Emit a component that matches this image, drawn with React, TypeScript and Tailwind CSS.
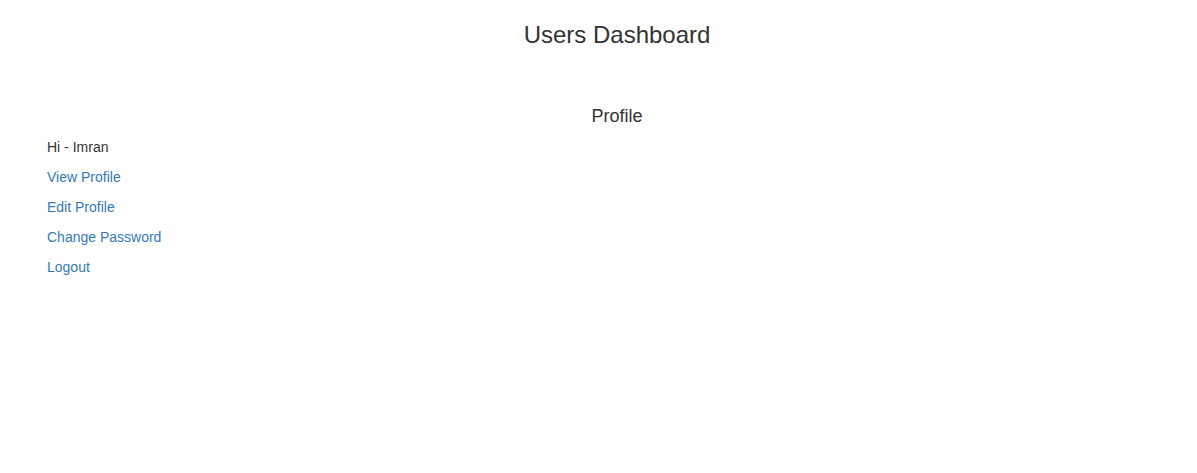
import React from 'react';

const links = ['View Profile', 'Edit Profile', 'Change Password', 'Logout'];

const App = () => {
  return (
    <div className="min-h-[473px] w-full bg-white text-[#333] text-[14px] leading-[20px] font-['Liberation_Sans',Arial,sans-serif]">
      <div className="pl-[37px]">
        {/* Header */}
        <h3 className="pt-[22px] text-center text-[24px] leading-[26.4px] font-normal">
          Users Dashboard
        </h3>

        {/* Profile section */}
        <h4 className="mt-[59px] text-center text-[18px] leading-[19.8px] font-normal">Profile</h4>

        <div className="mt-[10px] pl-[10px] flex flex-col gap-[10px]">
          <p>Hi - Imran</p>
          {links.map((label) => (
            <a key={label} href="#" className="text-[#337ab7] hover:underline w-fit">
              {label}
            </a>
          ))}
        </div>
      </div>
    </div>
  );
};

export default App;
